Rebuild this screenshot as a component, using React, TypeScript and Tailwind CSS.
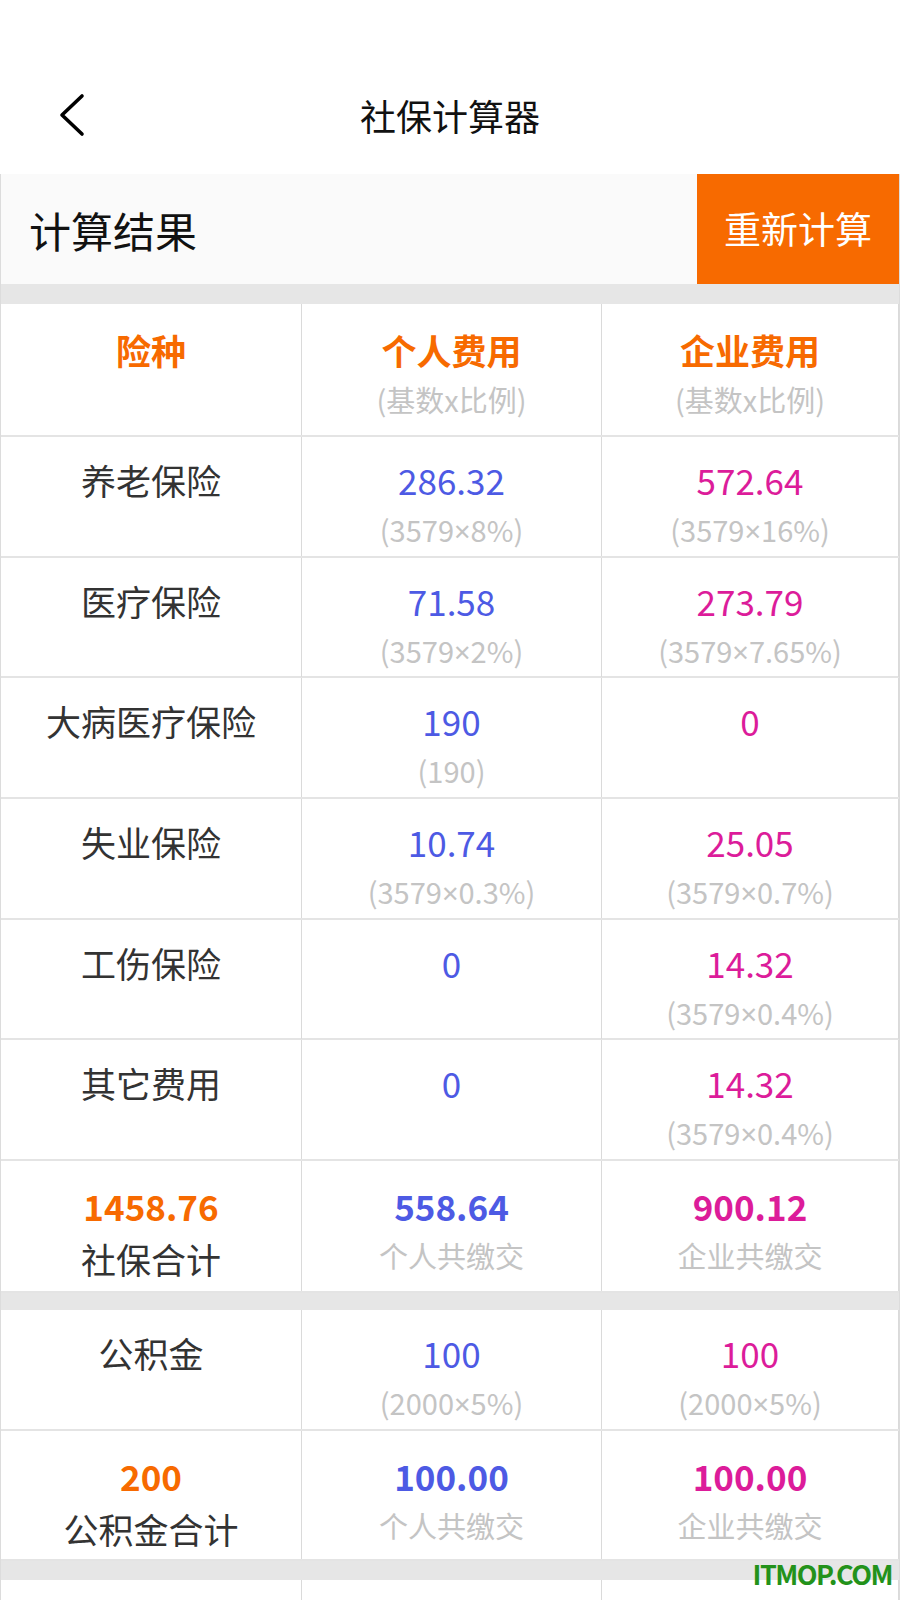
type Row = {
  name: string;
  personal: string;
  personalNote?: string;
  company: string;
  companyNote?: string;
};

const socialRows: Row[] = [
  { name: "养老保险", personal: "286.32", personalNote: "(3579×8%)", company: "572.64", companyNote: "(3579×16%)" },
  { name: "医疗保险", personal: "71.58", personalNote: "(3579×2%)", company: "273.79", companyNote: "(3579×7.65%)" },
  { name: "大病医疗保险", personal: "190", personalNote: "(190)", company: "0" },
  { name: "失业保险", personal: "10.74", personalNote: "(3579×0.3%)", company: "25.05", companyNote: "(3579×0.7%)" },
  { name: "工伤保险", personal: "0", company: "14.32", companyNote: "(3579×0.4%)" },
  { name: "其它费用", personal: "0", company: "14.32", companyNote: "(3579×0.4%)" },
];

const font = { fontFamily: '"Noto Sans CJK SC", "Noto Sans", sans-serif' };
const latin = { fontFamily: '"Noto Sans", sans-serif' };

// the CJK font draws × full width, so the sign gets a latin face
function Note({ text }: { text: string }) {
  const [a, b] = text.split("×");
  return (
    <span className="text-[29px] leading-[50px] text-[#c4c4c4]">
      {a}
      {b !== undefined && (
        <>
          <span style={latin}>×</span>
          {b}
        </>
      )}
    </span>
  );
}

function Cell({ children, className = "" }: { children?: React.ReactNode; className?: string }) {
  return (
    <div className={`flex flex-col items-center border-r border-[#dadada] ${className}`}>{children}</div>
  );
}

const cols = "grid grid-cols-[301px_300px_1fr]";

function DataRow({ row }: { row: Row }) {
  return (
    <div className={`${cols} h-[120.67px] border-b-2 border-[#e4e4e4]`}>
      <Cell className="pt-[19px]">
        <span className="text-[35px] leading-[48px] text-[#333]">{row.name}</span>
      </Cell>
      <Cell className="pt-[19px]">
        <span className="text-[35px] leading-[48px] text-[#4d5ae4]">{row.personal}</span>
        {row.personalNote && <Note text={row.personalNote} />}
      </Cell>
      <Cell className="pt-[19px]">
        <span className="text-[35px] leading-[48px] text-[#dc1c9a]">{row.company}</span>
        {row.companyNote && <Note text={row.companyNote} />}
      </Cell>
    </div>
  );
}

function TotalRow({ total, label, personal, company, height }: {
  total: string;
  label: string;
  personal: string;
  company: string;
  height: string;
}) {
  return (
    <div className={`${cols} ${height} border-b-2 border-[#e4e4e4]`}>
      <Cell className="pt-[21px]">
        <span className="text-[35px] leading-[48px] font-bold text-[#f76a00]">{total}</span>
        <span className="text-[35px] leading-[58px] text-[#333]">{label}</span>
      </Cell>
      <Cell className="pt-[21px]">
        <span className="text-[35px] leading-[48px] font-bold text-[#4d5ae4]">{personal}</span>
        <span className="text-[29px] leading-[50px] text-[#c4c4c4]">个人共缴交</span>
      </Cell>
      <Cell className="pt-[21px]">
        <span className="text-[35px] leading-[48px] font-bold text-[#dc1c9a]">{company}</span>
        <span className="text-[29px] leading-[50px] text-[#c4c4c4]">企业共缴交</span>
      </Cell>
    </div>
  );
}

export default function App() {
  return (
    <div className="relative h-[1600px] w-[900px] overflow-hidden bg-white" style={font}>
      {/* status bar space */}
      <div className="h-[56px]" />

      {/* nav bar */}
      <div className="grid h-[118px] grid-cols-[1fr_auto_1fr] items-center">
        <div className="pl-[57px]">
          <svg width="28" height="44" viewBox="0 0 28 44" fill="none">
            <polyline points="25,3 5,22 25,41" stroke="#000" strokeWidth="3.6" strokeLinecap="round" strokeLinejoin="round" />
          </svg>
        </div>
        <h1 className="text-[36px] leading-none text-[#111]">社保计算器</h1>
        <div />
      </div>

      <div className="border-x border-[#dcdcdc]">
        {/* result bar */}
        <div className="flex h-[110px] items-stretch bg-[#fafafa]">
          <div className="flex flex-1 items-center pl-[28px] text-[42px] text-[#111]">计算结果</div>
          <button className="w-[202px] bg-[#f76a00] text-[37px] text-white">重新计算</button>
        </div>
        <div className="h-[20px] bg-[#e6e6e6]" />

        {/* table header */}
        <div className={`${cols} h-[133px] border-b-2 border-[#e4e4e4]`}>
          <Cell className="pt-[22px]">
            <span className="text-[35px] leading-[48px] font-bold text-[#f76a00]">险种</span>
          </Cell>
          <Cell className="pt-[22px]">
            <span className="text-[35px] leading-[48px] font-bold text-[#f76a00]">个人费用</span>
            <span className="text-[29px] leading-[50px] text-[#c4c4c4]">(基数x比例)</span>
          </Cell>
          <Cell className="pt-[22px]">
            <span className="text-[35px] leading-[48px] font-bold text-[#f76a00]">企业费用</span>
            <span className="text-[29px] leading-[50px] text-[#c4c4c4]">(基数x比例)</span>
          </Cell>
        </div>

        {socialRows.map((r) => (
          <DataRow key={r.name} row={r} />
        ))}

        <TotalRow total="1458.76" label="社保合计" personal="558.64" company="900.12" height="h-[132px]" />
        <div className="h-[17px] bg-[#e6e6e6]" />

        <DataRow row={{ name: "公积金", personal: "100", personalNote: "(2000×5%)", company: "100", companyNote: "(2000×5%)" }} />
        <TotalRow total="200" label="公积金合计" personal="100.00" company="100.00" height="h-[130px]" />
        <div className="h-[19px] bg-[#e6e6e6]" />

        <div className={`${cols} h-[40px]`}>
          <Cell />
          <Cell />
          <Cell />
        </div>
      </div>

      {/* watermark */}
      <span className="absolute bottom-[13px] right-[8px] text-[27px] font-bold leading-none tracking-[-1.5px] text-[#23921a]">
        ITMOP.COM
      </span>
    </div>
  );
}
